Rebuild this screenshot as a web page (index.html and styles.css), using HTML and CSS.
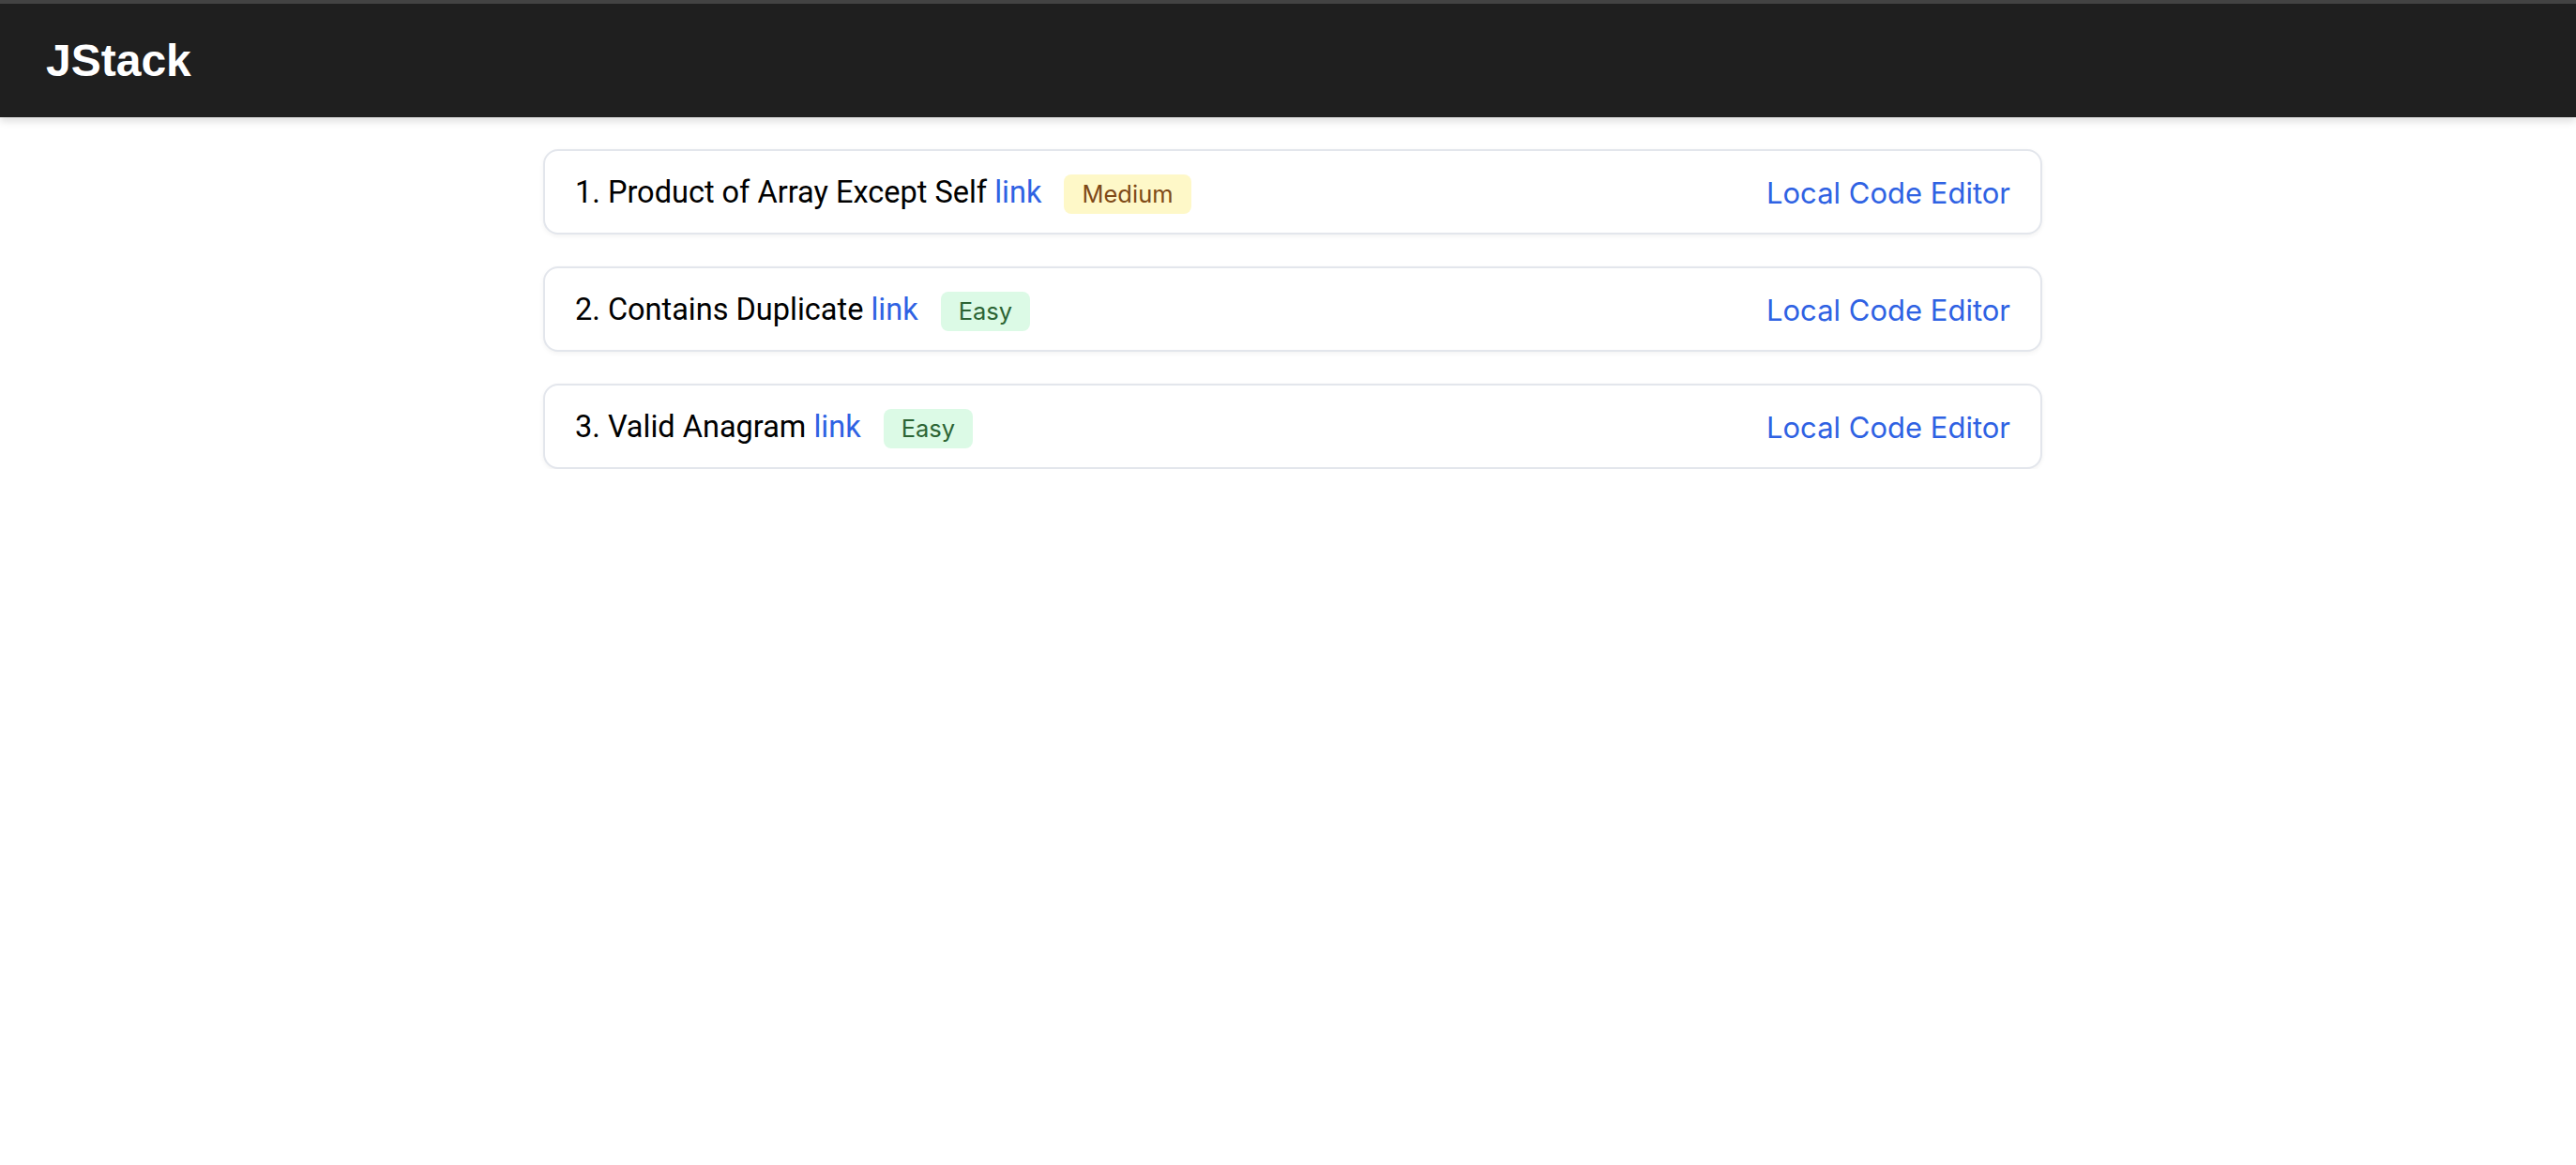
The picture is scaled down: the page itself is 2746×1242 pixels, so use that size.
FILE: index.html
```html
<!DOCTYPE html>
<html lang="en">
<head>
<meta charset="utf-8">
<title>JStack</title>
<link rel="stylesheet" href="styles.css">
</head>
<body>
<header class="topbar">
  <div class="brand">JStack</div>
</header>
<main class="page">
  <div class="list">
    <div class="card">
      <div class="card-left">
        <span class="title">1. Product of Array Except Self <a class="link" href="#">link</a></span>
        <span class="badge badge-medium">Medium</span>
      </div>
      <a class="editor" href="#">Local Code Editor</a>
    </div>
    <div class="card">
      <div class="card-left">
        <span class="title">2. Contains Duplicate <a class="link" href="#">link</a></span>
        <span class="badge badge-easy">Easy</span>
      </div>
      <a class="editor" href="#">Local Code Editor</a>
    </div>
    <div class="card">
      <div class="card-left">
        <span class="title">3. Valid Anagram <a class="link" href="#">link</a></span>
        <span class="badge badge-easy">Easy</span>
      </div>
      <a class="editor" href="#">Local Code Editor</a>
    </div>
  </div>
</main>
</body>
</html>
```
FILE: styles.css
```css
* { box-sizing: border-box; }
html, body { margin: 0; padding: 0; background: #ffffff; }
body { font-family: "Inter", "Roboto", sans-serif; }

.topbar {
  height: 125px;
  background: #1f1f1f;
  border-top: 4px solid #434343;
  display: flex;
  align-items: center;
  padding-left: 49px;
  box-shadow: 0 4px 8px rgba(0, 0, 0, 0.14);
  position: relative;
  z-index: 1;
}
.brand {
  font-family: "Liberation Sans", Arial, sans-serif;
  font-weight: 700;
  font-size: 48px;
  color: #ffffff;
  line-height: 1;
}

.page {
  padding: 34px 0 0 10px;
}
.list {
  width: 1598px;
  margin: 0 auto;
  display: flex;
  flex-direction: column;
  gap: 34px;
}
.card {
  height: 91px;
  border: 2px solid #e3e6ec;
  border-radius: 16px;
  background: #fff;
  box-shadow: 0 2px 5px rgba(0, 0, 0, 0.05);
  display: flex;
  align-items: center;
  justify-content: space-between;
  padding: 0 32px;
}
.card-left {
  display: flex;
  align-items: center;
  gap: 24px;
}
.title {
  font-family: "Roboto", sans-serif;
  font-size: 32.5px;
  color: #000;
  line-height: 1;
  padding-top: 2px;
}
.link, .editor {
  color: #2f62e3;
  text-decoration: none;
}
.editor {
  font-family: "Inter", sans-serif;
  font-size: 31px;
  line-height: 1;
  padding-top: 2px;
}
.badge {
  font-family: "Inter", sans-serif;
  font-size: 25.5px;
  height: 42px;
  padding: 0 19px;
  border-radius: 8px;
  display: inline-flex;
  align-items: center;
  margin-top: 4px;
}
.badge-medium { background: #fef8c8; color: #7f4a17; }
.badge-easy { background: #dcfae6; color: #2c6434; }
```
